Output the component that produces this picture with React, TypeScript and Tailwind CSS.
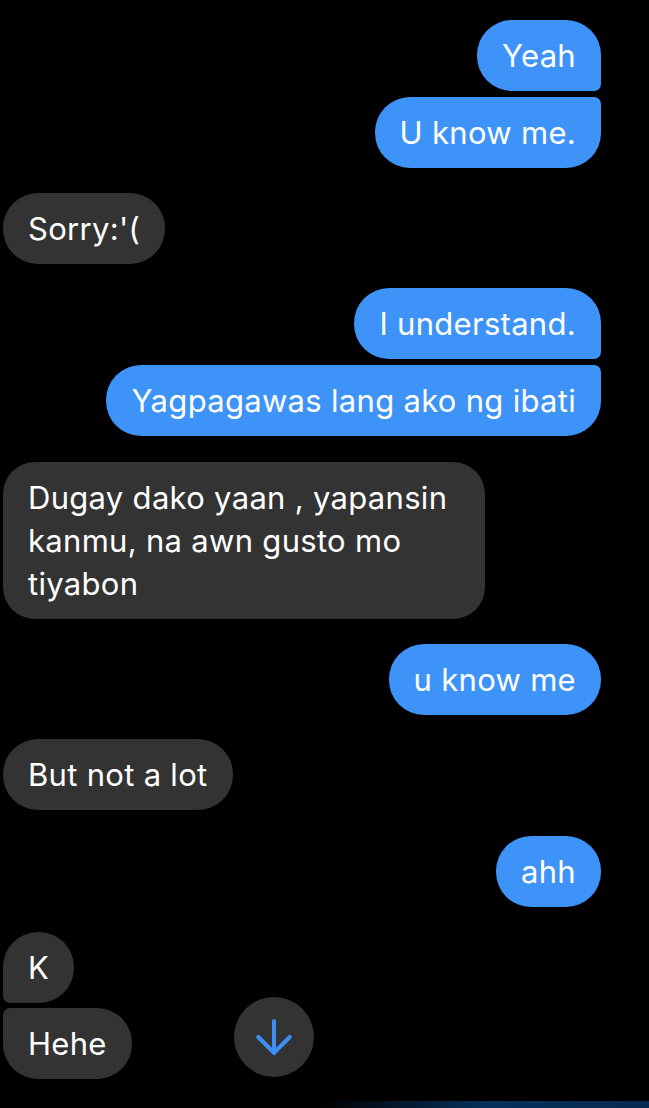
import { ArrowDown } from "lucide-react";

type Msg = { text: string; me: boolean; shape: string; gap: string };

const messages: Msg[] = [
  { text: "Yeah", me: true, shape: "rounded-[35px] rounded-br-[7px]", gap: "mt-0" },
  { text: "U know me.", me: true, shape: "rounded-[35px] rounded-tr-[7px]", gap: "mt-[6px]" },
  { text: "Sorry:'(", me: false, shape: "rounded-[35px]", gap: "mt-[25px]" },
  { text: "I understand.", me: true, shape: "rounded-[35px] rounded-br-[7px]", gap: "mt-[24px]" },
  { text: "Yagpagawas lang ako ng ibati", me: true, shape: "rounded-[35px] rounded-tr-[7px]", gap: "mt-[6px]" },
];

const rest: Msg[] = [
  { text: "u know me", me: true, shape: "rounded-[35px]", gap: "mt-[25px]" },
  { text: "But not a lot", me: false, shape: "rounded-[35px]", gap: "mt-[24px]" },
  { text: "ahh", me: true, shape: "rounded-[35px]", gap: "mt-[26px]" },
  { text: "K", me: false, shape: "rounded-[35px] rounded-bl-[7px]", gap: "mt-[25px]" },
];

function Bubble({ m }: { m: Msg }) {
  return (
    <div className={`flex ${m.me ? "justify-end" : "justify-start"} ${m.gap}`}>
      <div
        className={`${m.shape} px-[25px] py-[14px] leading-[43px] text-[31px] tracking-[0.3px] text-white whitespace-nowrap ${
          m.me ? "bg-[#3d93f8]" : "bg-[#333333]"
        }`}
      >
        {m.text}
      </div>
    </div>
  );
}

export default function App() {
  return (
    <div
      className="relative w-[649px] h-[1108px] overflow-hidden bg-black"
      style={{ fontFamily: "Inter, 'Noto Sans', sans-serif" }}
    >
      <div className="flex flex-col pt-[20px] pl-[3px] pr-[48px]">
        {messages.map((m, i) => (
          <Bubble key={i} m={m} />
        ))}

        <div className="flex justify-start mt-[26px]">
          <div className="w-[482px] rounded-[32px] bg-[#333333] px-[25px] py-[14px] leading-[43px] text-[31px] tracking-[0.3px] text-white">
            Dugay dako yaan , yapansin
            <br />
            kanmu, na awn gusto mo
            <br />
            tiyabon
          </div>
        </div>

        {rest.map((m, i) => (
          <Bubble key={i} m={m} />
        ))}

        {/* last row with scroll-down button */}
        <div className="relative flex justify-start mt-[5px]">
          <div className="rounded-[35px] rounded-tl-[7px] bg-[#333333] px-[25px] py-[14px] leading-[43px] text-[31px] tracking-[0.3px] text-white">
            Hehe
          </div>
          <div className="absolute left-[231px] top-[-11px] w-[80px] h-[80px] rounded-full bg-[#333333] flex items-center justify-center">
            <ArrowDown size={54} strokeWidth={1.8} className="text-[#3d8ff5]" />
          </div>
        </div>
      </div>

      {/* bottom glow of the input bar */}
      <div className="absolute bottom-0 left-[320px] right-0 h-[7px] bg-gradient-to-r from-transparent via-[#06305a] to-[#062a52]" />
    </div>
  );
}
